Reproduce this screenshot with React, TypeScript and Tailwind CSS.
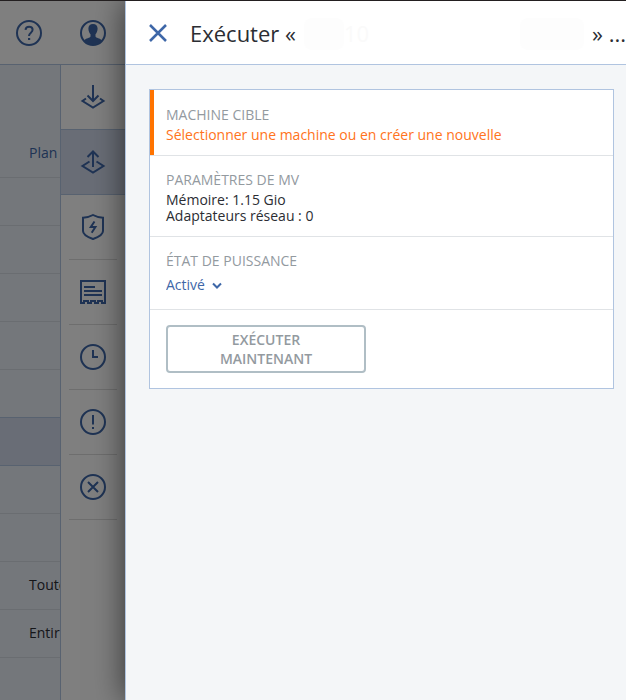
import React, { useState } from 'react';
import clsx from 'clsx';

const stroke = {
    fill: 'none',
    stroke: 'currentColor',
    strokeWidth: 2,
} as const;

const HelpIcon = () => (
    <svg className="w-7 h-7" viewBox="0 0 28 28" {...stroke}>
        <circle cx="14" cy="14" r="12" />
        <path d="M10.5 10.8C10.7 8.8 12.2 7.8 14.1 7.8c2.1 0 3.5 1.2 3.5 3 0 3-3.6 2.8-3.6 6.2" />
        <path d="M13 20h2.2" />
    </svg>
);

const UserIcon = () => (
    <svg className="w-7 h-7" viewBox="0 0 28 28" {...stroke}>
        <circle cx="14" cy="14" r="12" />
        <path
            d="M14 5c-3 0-4.600 1.800-4.600 4.500 0 2.500.9 4.500 2.100 5.700v2.300c-.4 1.500-4.500 1.700-6.500 4A12 12 0 0 0 14 26a12 12 0 0 0 9-4.500c-2-2.300-6.100-2.500-6.500-4v-2.300c1.200-1.200 2.100-3.200 2.100-5.700C18.600 6.800 17 5 14 5z"
            fill="currentColor"
            stroke="none"
        />
    </svg>
);

const BackupIcon = () => (
    <svg className="w-7 h-7" viewBox="0 0 28 28" {...stroke}>
        <path d="M14 2v16M8.500 12.500L14 18l5.500-5.500" />
        <path d="M7 15.500L3.500 18 14 24.500 24.500 18 21 15.500" />
    </svg>
);

const RecoveryIcon = () => (
    <svg className="w-7 h-7" viewBox="0 0 28 28" {...stroke}>
        <path d="M14 19V3.500M8.500 9L14 3.500 19.500 9" />
        <path d="M10.500 13.500L3.500 18 14 24.500 24.500 18 17.500 13.500" />
    </svg>
);

const ShieldIcon = () => (
    <svg className="w-7 h-7" viewBox="0 0 28 28" {...stroke}>
        <path d="M14 2c-3 1.700-6.500 2.600-10 2.800V18c0 4.500 6 6.500 10 8 4-1.500 10-3.500 10-8V4.800C20.500 4.600 17 3.700 14 2z" />
        <path d="M15.500 8.500l-3.700 5.500h4.600l-3.700 5.800" />
    </svg>
);

const ReportIcon = () => (
    <svg className="w-7 h-7" viewBox="0 0 28 28" {...stroke}>
        <path d="M2 25V3h24v22h-3v-2h-4v2h-3v-2h-4v2H9v-2H5v2z" />
        <path d="M5 9h11M5 13h18M5 17h18" />
    </svg>
);

const ClockIcon = () => (
    <svg className="w-7 h-7" viewBox="0 0 28 28" {...stroke}>
        <circle cx="14" cy="14" r="12" />
        <path d="M14 7v7h5" />
    </svg>
);

const AlertIcon = () => (
    <svg className="w-7 h-7" viewBox="0 0 28 28" {...stroke}>
        <circle cx="14" cy="14" r="12" />
        <path d="M14 7v9.500M14 19v2" />
    </svg>
);

const CancelIcon = () => (
    <svg className="w-7 h-7" viewBox="0 0 28 28" {...stroke}>
        <circle cx="14" cy="14" r="12" />
        <path d="M9 9l10 10M19 9L9 19" />
    </svg>
);

const actions = [
    { label: 'Sauvegarde', Icon: BackupIcon },
    { label: 'Restauration', Icon: RecoveryIcon, active: true },
    { label: 'Protection', Icon: ShieldIcon },
    { label: 'Rapport', Icon: ReportIcon },
    { label: 'Activités', Icon: ClockIcon },
    { label: 'Alertes', Icon: AlertIcon },
    { label: 'Supprimer', Icon: CancelIcon },
];

const rows = [
    { text: '' },
    { text: '' },
    { text: '' },
    { text: '' },
    { text: '', beforeActive: true },
    { text: '', active: true },
    { text: '' },
    { text: '' },
    { text: 'Toute' },
    { text: 'Entire' },
];

const Background: React.FC = () => (
    <div className="relative flex w-[125px] shrink-0 flex-col bg-white">
        <header className="flex h-16 items-center justify-between border-b border-[#b0c4e0] pr-[18px] pl-[15px] text-[#3e67a8]">
            <button aria-label="Aide"><HelpIcon /></button>
            <button aria-label="Compte"><UserIcon /></button>
        </header>
        <div className="flex flex-1">
            <div className="w-[61px] overflow-hidden border-r border-[#b0c4e0] bg-[#e8eef7]">
                <div className="flex h-[113px] items-end border-b border-[#d5dbe3] pb-[14px] pl-[29px] text-[#3e67a8]">
                    Plan
                </div>
                {rows.map((row, i) => (
                    <div
                        key={i}
                        className={clsx(
                            'flex h-12 items-center border-b pb-0.5 pl-[29px]',
                            row.active && 'bg-[#d3daed]',
                            row.active || row.beforeActive ? 'border-[#b0c4e0]' : 'border-[#d5dbe3]'
                        )}
                    >
                        {row.text}
                    </div>
                ))}
            </div>
            <nav className="flex flex-1 flex-col text-[#3e67a8]">
                {actions.map(({ label, Icon, active }, i) => (
                    <div key={label} className={clsx('flex h-[65px]', active && 'bg-[#d3daed]', i > 1 && 'px-2')}>
                        <button
                            aria-label={label}
                            className={clsx(
                                'flex flex-1 items-center justify-center border-b',
                                i < 2 ? 'border-[#b0c4e0]' : 'border-[#dddddd]'
                            )}
                        >
                            <Icon />
                        </button>
                    </div>
                ))}
            </nav>
        </div>
        {/* Modal backdrop */}
        <div className="absolute inset-0 bg-black/50" />
    </div>
);

const RunPanel: React.FC = () => {
    const [power, setPower] = useState('on');

    return (
        <main className="relative flex min-w-0 flex-1 flex-col border-l border-[#b0c4e0] bg-[#f4f6f8] shadow-[0_0_30px_rgba(0,0,0,0.6)]">
            <header className="flex h-16 items-center border-b border-[#b0c4e0] bg-white pl-[22px]">
                <button aria-label="Fermer" className="text-[#3e67a8]">
                    <svg className="h-5 w-5" viewBox="0 0 20 20" {...stroke} strokeWidth={2.5}>
                        <path d="M2 2l16 16M18 2L2 18" />
                    </svg>
                </button>
                <h1 className="ml-[22px] flex flex-1 items-center pt-0.5 text-[22px] whitespace-nowrap">
                    <span>Exécuter «</span>
                    {/* Hidden machine name */}
                    <span className="ml-2 h-8 w-10 rounded-lg bg-[#fdfdfd]" />
                    <span className="text-[#fafafa]">10</span>
                    <span className="mr-2 ml-auto h-8 w-16 rounded-lg bg-[#fdfdfd]" />
                    <span>» ...</span>
                </h1>
            </header>

            <div className="mt-6 mr-3 ml-[23px] border border-[#b0c4e0] bg-white">
                <section className="border-b border-[#e0e3e6] leading-5">
                    <div className="border-l-4 border-[#ff7300] pt-[15px] pb-[10px] pl-3">
                        <h2 className="text-[#939a9f]">MACHINE CIBLE</h2>
                        <a href="#machine" className="block text-[#ff7320]">
                            Sélectionner une machine ou en créer une nouvelle
                        </a>
                    </div>
                </section>
                <section className="border-b border-[#e0e3e6] px-4 pt-[14px] pb-3">
                    <h2 className="leading-5 text-[#939a9f]">PARAMÈTRES DE MV</h2>
                    <p className="mt-0.5 leading-4">
                        Mémoire: 1.15 Gio
                        <br />
                        Adaptateurs réseau : 0
                    </p>
                </section>
                <section className="border-b border-[#e0e3e6] px-4 py-[14px] leading-5">
                    <h2 className="text-[#939a9f]">
                        <label htmlFor="power">ÉTAT DE PUISSANCE</label>
                    </h2>
                    <div className="relative mt-1 w-[57px] text-[#3e67a8]">
                        <select
                            id="power"
                            value={power}
                            onChange={(e) => setPower(e.target.value)}
                            className="block w-full appearance-none bg-transparent"
                        >
                            <option value="on">Activé</option>
                            <option value="off">Désactivé</option>
                        </select>
                        <svg className="pointer-events-none absolute top-1 right-0 h-3 w-3" viewBox="0 0 12 12" {...stroke}>
                            <path d="M2 4.500l4 4 4-4" />
                        </svg>
                    </div>
                </section>
                <div className="px-4 py-[15px]">
                    <button className="h-12 w-[200px] rounded border-2 border-[#b0bec5] px-10 leading-[19px] font-semibold text-[#939a9f]">
                        EXÉCUTER MAINTENANT
                    </button>
                </div>
            </div>
        </main>
    );
};

const App: React.FC = () => (
    <div className="flex min-h-screen overflow-hidden border-t border-[#231f20] font-['Open_Sans',sans-serif] text-sm text-[#2b2d33]">
        <Background />
        <RunPanel />
    </div>
);

export default App;
